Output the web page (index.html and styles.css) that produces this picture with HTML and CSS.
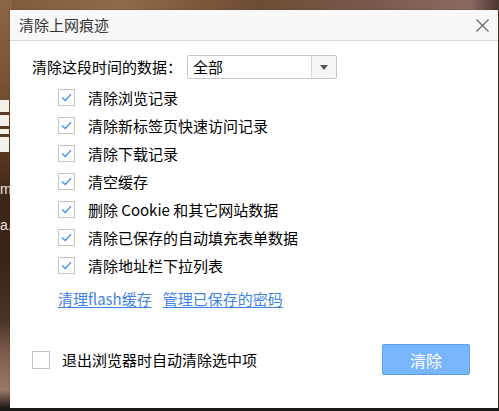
FILE: index.html
```html
<!DOCTYPE html>
<html lang="zh-CN">
<head>
<meta charset="utf-8">
<title>清除上网痕迹</title>
<link rel="stylesheet" href="styles.css">
</head>
<body>
<div class="backdrop">
  <div class="bg-glyph"></div>
  <span class="bg-text bg-m">m</span>
  <span class="bg-text bg-a">a.</span>
</div>
<div class="dialog">
  <div class="titlebar">
    <span class="title">清除上网痕迹</span>
    <svg class="close" width="13" height="13" viewBox="0 0 13 13"><path d="M0.5 0.5L12.5 12.5M12.5 0.5L0.5 12.5" stroke="#666" stroke-width="1.2" fill="none"/></svg>
  </div>
  <div class="content">
    <div class="range-row">
      <span class="range-label">清除这段时间的数据：</span>
      <div class="select">
        <span class="select-value">全部</span>
        <span class="select-btn"><svg width="8" height="5" viewBox="0 0 8 5"><path d="M0 0H8L4 5Z" fill="#555"/></svg></span>
      </div>
    </div>
    <ul class="options">
      <li class="option"><span class="check on"><svg width="17" height="17" viewBox="0 0 17 17"><path d="M4 8.5L7.2 11.5L13 5.2" stroke="#4a92ea" stroke-width="1.3" fill="none"/></svg></span><span>清除浏览记录</span></li>
      <li class="option"><span class="check on"><svg width="17" height="17" viewBox="0 0 17 17"><path d="M4 8.5L7.2 11.5L13 5.2" stroke="#4a92ea" stroke-width="1.3" fill="none"/></svg></span><span>清除新标签页快速访问记录</span></li>
      <li class="option"><span class="check on"><svg width="17" height="17" viewBox="0 0 17 17"><path d="M4 8.5L7.2 11.5L13 5.2" stroke="#4a92ea" stroke-width="1.3" fill="none"/></svg></span><span>清除下载记录</span></li>
      <li class="option"><span class="check on"><svg width="17" height="17" viewBox="0 0 17 17"><path d="M4 8.5L7.2 11.5L13 5.2" stroke="#4a92ea" stroke-width="1.3" fill="none"/></svg></span><span>清空缓存</span></li>
      <li class="option"><span class="check on"><svg width="17" height="17" viewBox="0 0 17 17"><path d="M4 8.5L7.2 11.5L13 5.2" stroke="#4a92ea" stroke-width="1.3" fill="none"/></svg></span><span>删除 Cookie 和其它网站数据</span></li>
      <li class="option"><span class="check on"><svg width="17" height="17" viewBox="0 0 17 17"><path d="M4 8.5L7.2 11.5L13 5.2" stroke="#4a92ea" stroke-width="1.3" fill="none"/></svg></span><span>清除已保存的自动填充表单数据</span></li>
      <li class="option"><span class="check on"><svg width="17" height="17" viewBox="0 0 17 17"><path d="M4 8.5L7.2 11.5L13 5.2" stroke="#4a92ea" stroke-width="1.3" fill="none"/></svg></span><span>清除地址栏下拉列表</span></li>
    </ul>
    <div class="links">
      <a class="link" href="#">清理flash缓存</a>
      <a class="link" href="#">管理已保存的密码</a>
    </div>
    <div class="footer">
      <label class="exit-opt"><span class="check"></span><span>退出浏览器时自动清除选中项</span></label>
      <button class="btn-clear">清除</button>
    </div>
  </div>
</div>
</body>
</html>
```
FILE: styles.css
```css
* { box-sizing: border-box; }
html, body { margin: 0; padding: 0; }
body {
  width: 499px;
  height: 411px;
  overflow: hidden;
  position: relative;
  font-family: "Noto Sans CJK SC", "Noto Sans", sans-serif;
  background:
    linear-gradient(to bottom, transparent 0, transparent 405px, #1e1816 408px, #1e1816 411px),
    linear-gradient(to right, #7e5a3a 0, #8d6a48 120px, #6e4c34 260px, #7b5a4e 380px, #8a6a62 470px, #4a3630 499px);
}
.backdrop {
  position: absolute;
  left: 0; top: 0;
  width: 12px; height: 411px;
  background: linear-gradient(to bottom, #8a6644 0, #7a5434 80px, #5a3820 150px, #3e2616 200px, #3a2418 260px, #4a3428 320px, #7a5a48 350px, #9a7a66 390px, #1e1816 408px);
}
.bg-glyph {
  position: absolute;
  left: 0; top: 100px;
  width: 9px; height: 52px;
  background: linear-gradient(to bottom, #f4f0ea 0, #f4f0ea 12px, #5a3a22 12px, #5a3a22 15px, #f4f0ea 15px, #f4f0ea 26px, #5a3a22 26px, #5a3a22 29px, #f4f0ea 29px, #f4f0ea 34px, #5a3a22 34px, #5a3a22 37px, #f4f0ea 37px);
}
.bg-text {
  position: absolute;
  left: 0;
  color: #e8e2dc;
  font-family: "Liberation Sans", sans-serif;
  font-size: 14px;
  line-height: 18px;
}
.bg-m { top: 180px; }
.bg-a { top: 216px; }

.dialog {
  position: relative;
  margin: 10px 0 0 10px;
  width: 488px;
  height: 398px;
  background: #fff;
  display: flex;
  flex-direction: column;
  box-shadow: 0 0 0 1px rgba(0,0,0,0.08);
}
.titlebar {
  height: 31px;
  background: #f8f8f8;
  border-bottom: 1px solid #d8d8d8;
  display: flex;
  align-items: center;
  justify-content: space-between;
  padding: 0 9px 0 9px;
}
.title {
  font-size: 15px;
  line-height: 20px;
  color: #333;
}
.close { display: block; }

.content {
  flex: 1;
  display: flex;
  flex-direction: column;
  padding: 14px 28px 33px 22px;
}
.range-row {
  display: flex;
  align-items: center;
  height: 24px;
}
.range-label {
  font-size: 15px;
  line-height: 20px;
  color: #000;
  width: 155px;
}
.select {
  width: 150px;
  height: 24px;
  border: 1px solid #c6c6cc;
  border-radius: 2px;
  display: flex;
}
.select-value {
  flex: 1;
  font-size: 15px;
  line-height: 22px;
  padding-left: 5px;
  color: #000;
}
.select-btn {
  width: 25px;
  border-left: 1px solid #d8d8d8;
  background: #f5f5f5;
  display: flex;
  align-items: center;
  justify-content: center;
}
.options {
  list-style: none;
  margin: 4px 0 0 26px;
  padding: 0;
}
.option {
  height: 28px;
  display: flex;
  align-items: center;
  font-size: 15px;
  color: #000;
}
.check {
  width: 17px;
  height: 17px;
  border: 1px solid #c4c4c4;
  background: #fff;
  margin-right: 13px;
  position: relative;
  flex: none;
}
.check svg { position: absolute; left: -1px; top: -1px; }
.links {
  margin: 5px 0 0 26px;
  display: flex;
  gap: 11px;
  height: 28px;
  align-items: center;
}
.link {
  font-size: 15px;
  color: #3f82e6;
  text-decoration: underline;
  text-underline-offset: 2px;
}
.footer {
  margin-top: auto;
  display: flex;
  align-items: center;
  justify-content: space-between;
  height: 31px;
}
.exit-opt {
  display: flex;
  align-items: center;
  font-size: 15px;
  color: #000;
}
.exit-opt .check { margin-right: 12px; width: 18px; height: 18px; }
.btn-clear {
  width: 88px;
  height: 31px;
  background: #78b6ff;
  border: 1px solid #5a9ef0;
  border-radius: 2px;
  color: #fff;
  font-family: "Noto Sans CJK SC", sans-serif;
  font-size: 16px;
  padding: 0;
}
```
